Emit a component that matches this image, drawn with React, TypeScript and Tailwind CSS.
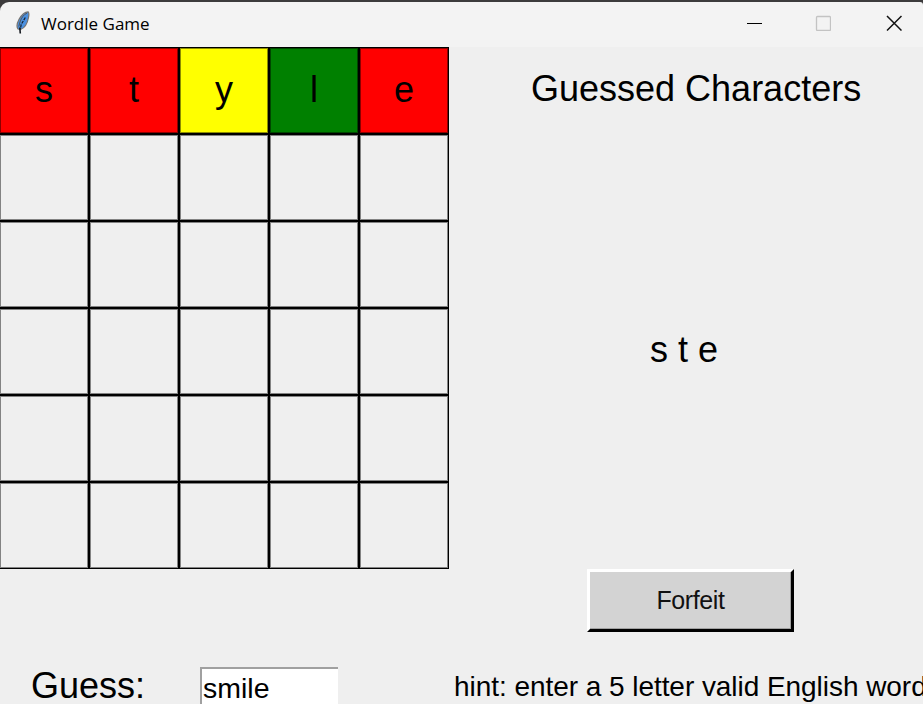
type Cell = { letter: string; tone: string };

const RED = 'bg-[#ff0000]';
const first: Cell[] = [
  { letter: 's', tone: RED },
  { letter: 't', tone: RED },
  { letter: 'y', tone: 'bg-[#ffff00]' },
  { letter: 'l', tone: 'bg-[#008000]' },
  { letter: 'e', tone: RED },
];
const empty: Cell[] = Array.from({ length: 25 }, () => ({ letter: '', tone: 'bg-[#efefef]' }));
const cells = [...first, ...empty];

function Feather() {
  return (
    <svg className="ml-[15px] mt-[9px] h-6 w-4 shrink-0" viewBox="0 0 16 24">
      <path d="M13.200 .8C10 1 6.500 4 4.200 8C2 12 1.500 16 3 18L5.500 18.500C10 17 12.500 12 13.500 6.500C14 4 14.200 1.800 13.200 .8Z" fill="#4a90e0" stroke="#77736f" strokeWidth="1.200" />
      <path d="M12 2.200C9 3.200 6.500 6.500 5 11L3.800 15.500" fill="none" stroke="#50565e" strokeWidth="1" />
      <path d="M10.300 6.500L6.200 13.500L5.400 18" fill="none" stroke="#15202e" strokeWidth="1.200" strokeDasharray="3 1" />
      <path d="M4.800 16.500L5.300 22.500" fill="none" stroke="#15191f" strokeWidth="1.600" />
    </svg>
  );
}

function TitleBar() {
  return (
    <div className="h-[47px] shrink-0 bg-[#3c3b3c] pt-[2px]">
      <header className="flex h-[45px] rounded-tl-[9px] rounded-tr-[3px] bg-[#f3f3f3]">
        <Feather />
        <h1 className="ml-[10px] mt-[9px] w-[120px] whitespace-nowrap font-['Open_Sans',sans-serif] text-[17px] leading-[25px] text-black">Wordle Game</h1>
        <svg className="ml-auto mr-[53px] mt-[13px] h-4 w-4" viewBox="0 0 16 16" shapeRendering="crispEdges">
          <path d="M1 8.500H16" stroke="#000" />
        </svg>
        <svg className="mr-[55px] mt-[13px] h-4 w-4" viewBox="0 0 16 16">
          <rect x="1.500" y="1.500" width="14" height="14" rx="1" fill="none" stroke="#c3c3c3" strokeWidth="1.300" />
        </svg>
        <svg className="mr-[21px] mt-[13px] h-4 w-4" viewBox="0 0 16 16">
          <path d="M1 1L15.500 15.500M15.500 1L1 15.500" stroke="#111" strokeWidth="1.500" />
        </svg>
      </header>
    </div>
  );
}

export default function App() {
  return (
    <div className="flex h-[704px] w-[923px] flex-col overflow-hidden bg-[#efefef] font-['Liberation_Sans',Arial,sans-serif] text-black">
      <TitleBar />
      <main className="flex h-[522px] shrink-0">
        <div className="grid h-[522px] w-[449px] shrink-0 grid-cols-[88px_88px_88px_88px_88px] grid-rows-[85px_85px_85px_85px_85px_85px] gap-[2px] bg-black pb-px pr-px pt-px">
          {cells.map((c, i) => (
            <div key={i} className={`flex items-center justify-center border border-black/45 pb-px text-[36px] leading-none ${c.tone}`}>
              {c.letter}
            </div>
          ))}
        </div>
        <section className="flex flex-1 flex-col">
          <h2 className="ml-[82px] mt-[22px] whitespace-nowrap text-[36px] leading-10">Guessed Characters</h2>
          <p className="ml-[201px] mt-[221px] text-[36px] leading-10">s t e</p>
        </section>
      </main>
      <div className="flex h-[63px] shrink-0 pl-[587px]">
        <button className="h-[63px] w-[207px] border-[3px] border-b-black border-l-white border-r-black border-t-white bg-[#d3d3d3] text-[25px] leading-none tracking-[-0.4px] text-[#111] shadow-[inset_-1px_-1px_0_#a0a0a0]">Forfeit</button>
      </div>
      <footer className="flex flex-1 pt-[34px]">
        <label className="ml-[31px] w-[169px] shrink-0 whitespace-nowrap text-[36px] leading-[40px]">Guess:</label>
        <div className="mt-px h-[50px] w-[138px] shrink-0 border-l-2 border-t-2 border-[#a0a0a0] bg-white pl-px pt-[3px] text-[28.500px] leading-8">smile</div>
        <p className="ml-[116px] mt-[5px] shrink-0 whitespace-nowrap text-[28px] leading-8 tracking-[-0.05px]">hint: enter a 5 letter valid English word</p>
      </footer>
    </div>
  );
}
